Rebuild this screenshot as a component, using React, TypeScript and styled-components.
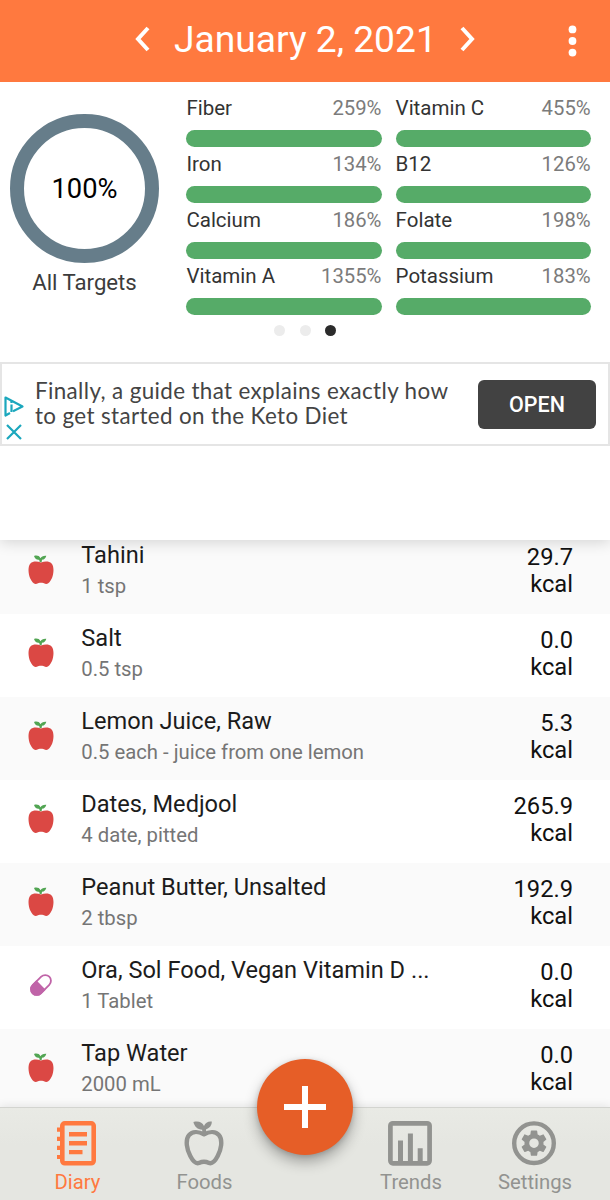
import React from 'react';
import styled, { createGlobalStyle } from 'styled-components';

const GlobalStyle = createGlobalStyle`
  * { box-sizing: border-box; }
  body { margin: 0; background: #fff; font-family: Roboto, "Liberation Sans", sans-serif; }
  svg { display: block; flex: none; }
`;

const Screen = styled.div`
  width: 610px;
  height: 1200px;
  display: flex;
  flex-direction: column;
  overflow: hidden;
`;

const Header = styled.header`
  height: 82px;
  flex: none;
  display: flex;
  align-items: center;
  padding: 0 30px 4px 135px;
  background: #ff793f;
  color: #fff;
`;

const HeaderTitle = styled.h1`
  width: 261px;
  margin: 0 25px 0 24px;
  font-size: 37.2px;
  line-height: 44px;
  font-weight: 400;
  white-space: nowrap;
`;

const MenuSlot = styled.div`
  margin-left: auto;
  padding-top: 3px;
`;

const TopPanel = styled.section`
  height: 458px;
  flex: none;
  background: #fff;
  position: relative;
  z-index: 1;
  box-shadow: 0 2px 14px rgba(0, 0, 0, 0.16);
  clip-path: inset(0 0 -24px 0);
`;

const Summary = styled.div`
  height: 237px;
  display: flex;
  padding: 13px 19px 0 10px;
`;

const Targets = styled.div`
  width: 149px;
  padding-top: 18.5px;
  margin-right: 27.4px;
`;

const Ring = styled.div`
  width: 149px;
  height: 149px;
  padding-top: 1px;
  border: 14px solid #667d8a;
  border-radius: 50%;
  display: flex;
  align-items: center;
  justify-content: center;
  font-size: 27.3px;
  color: #000;
`;

const TargetsLabel = styled.div`
  margin-top: 6.5px;
  text-align: center;
  font-size: 22.2px;
  line-height: 26px;
  color: #3c3c3c;
`;

const NutrientGrid = styled.div`
  display: grid;
  grid-template-columns: 195.6px 195.6px;
  grid-auto-rows: 56px;
  column-gap: 13.6px;
`;

const Nutrient = styled.div`
  display: flex;
  flex-direction: column;
`;

const NutrientText = styled.div`
  display: flex;
  justify-content: space-between;
  padding-right: 0.5px;
  font-size: 20.5px;
  line-height: 26px;
  color: #333;
`;

const Percent = styled.span`
  font-size: 20.3px;
  color: #7b7b7b;
`;

const Bar = styled.div`
  height: 17px;
  margin-top: 9px;
  border-radius: 9px;
  background: #56ab68;
`;

const Dots = styled.div`
  height: 43px;
  display: flex;
  justify-content: center;
  gap: 14.5px;
  padding: 6px 0 0 0;
`;

const Dot = styled.span<{ $active?: boolean }>`
  width: 11px;
  height: 11px;
  border-radius: 50%;
  background: ${(p) => (p.$active ? '#2b2b2b' : '#ececec')};
`;

const Ad = styled.aside`
  height: 84px;
  border: 2px solid #e5e5e5;
  display: flex;
  align-items: center;
  padding: 0 11px 0 1px;
`;

const AdMarks = styled.div`
  display: flex;
  flex-direction: column;
  align-items: center;
  gap: 7px;
  width: 21px;
  padding-top: 27px;
`;

const AdText = styled.p`
  width: 443px;
  margin: -1px 0 0 11px;
  font-family: Lato, Roboto, sans-serif;
  font-size: 22.4px;
  line-height: 24.5px;
  letter-spacing: 0.37px;
  color: #444;
  white-space: nowrap;
`;

const AdButton = styled.button`
  width: 118px;
  height: 49px;
  border: 0;
  padding: 0;
  border-radius: 6px;
  background: #424242;
  color: #fff;
  font: 500 21.5px Roboto, sans-serif;
`;

const List = styled.main`
  flex: 1;
  min-height: 0;
  margin-top: -9px;
  overflow: hidden;
`;

const Row = styled.div`
  height: 83px;
  display: flex;
  padding: 0 37px 0 26px;
  background: #fff;
  &:nth-child(odd) { background: #fafafa; }
`;

const RowIcon = styled.div`
  width: 29px;
  margin-right: 26.3px;
  padding-top: 24px;
  display: flex;
  justify-content: center;
`;

const RowBody = styled.div`
  flex: 1;
  padding-top: 10px;
`;

const FoodName = styled.div`
  font-size: 23.6px;
  line-height: 28px;
  color: #1c1c1c;
  white-space: nowrap;
`;

const Serving = styled.div`
  margin-top: 4px;
  font-size: 20.3px;
  line-height: 26px;
  color: #757575;
`;

const Energy = styled.div`
  padding-top: 13px;
  text-align: right;
  font-size: 23.7px;
  line-height: 27px;
  color: #111;
`;

const Nav = styled.nav`
  height: 93px;
  flex: none;
  position: relative;
  z-index: 2;
  display: flex;
  justify-content: space-between;
  padding: 0 13px 0 14px;
  border-top: 1px solid #d3d4d0;
  background: linear-gradient(#e9eae5, #e5e6e1 40%);
  box-shadow: 0 -2px 8px rgba(0, 0, 0, 0.08);
`;

const NavGroup = styled.div`
  display: flex;
`;

const NavItem = styled.div<{ $active?: boolean; $width: number }>`
  width: ${(p) => p.$width}px;
  padding-top: 12px;
  display: flex;
  flex-direction: column;
  align-items: center;
  color: ${(p) => (p.$active ? '#ff793f' : '#929390')};
  > svg { margin-right: 2px; }
`;

const NavLabel = styled.span`
  margin-top: 3px;
  font-size: 20.3px;
  line-height: 26px;
`;

const AddButton = styled.button`
  position: absolute;
  left: 257px;
  top: -49px;
  width: 96px;
  height: 96px;
  border: 0;
  padding: 0;
  border-radius: 50%;
  background: #e65e27;
  display: flex;
  align-items: center;
  justify-content: center;
  box-shadow: 0 7px 14px rgba(0, 0, 0, 0.3), 0 1px 5px rgba(0, 0, 0, 0.14);
`;

const Chevron = ({ d }: { d: string }) => (
  <svg width="15" height="26" viewBox="0 0 15 26" fill="none" stroke="currentColor" strokeWidth="4">
    <path d={d} />
  </svg>
);

const Apple = () => (
  <svg width="26" height="30" viewBox="0 0 26 30">
    <path
      d="M13 7.4C8.7 5.9 4.8 6.1 2.4 8.4C-.3 11.4.2 18.4 2 23C3.6 26.6 5.7 29.2 8 28.9C10.2 28.3 11.3 27.7 13 27.7C14.7 27.7 15.8 28.3 18 28.9C20.3 29.2 22.4 26.6 24 23C25.8 18.4 26.3 11.4 23.6 8.4C21.2 6.1 17.3 5.9 13 7.4Z"
      fill="#db4844"
    />
    <path
      d="M11.4 6.8C11.8 5.8 11.5 5.2 10.4 4.8C8.2 4.5 6.7 3 6 .9C8.7.1 11.3.6 12.5 3.2C13.3 1.5 15.2.6 18.3.8C17.9 3.2 16.3 4.6 14 4.8L13.6 7.2Z"
      fill="#52a553"
    />
  </svg>
);

const Pill = () => (
  <svg width="24" height="30" viewBox="0 0 24 30">
    <g transform="rotate(45 12 15)">
      <rect x="6.3" y="3.3" width="11.4" height="23.4" rx="5.7" fill="#fff" stroke="#c064a8" strokeWidth="1.8" />
      <path d="M5.4 15H18.6V21A6.6 6.6 0 0 1 5.4 21Z" fill="#c064a8" />
    </g>
  </svg>
);

const DiaryIcon = () => (
  <svg width="40" height="46" viewBox="0 0 40 46" fill="none" stroke="currentColor">
    <rect x="5.3" y="3.3" width="31.4" height="40" rx="2.5" strokeWidth="4.6" />
    <path d="M0 9.7H6M0 18.8H6M0 27.9H6M0 37H6" strokeWidth="4.2" />
    <path d="M12 14.3H30M12 23.2H30M12 32.1H25.5" strokeWidth="4.4" />
  </svg>
);

const FoodsIcon = () => (
  <svg width="40" height="46" viewBox="0 0 40 46">
    <path
      d="M20 14.4C14 11 8.2 11.4 5 15.2C.9 20.2 3 29.8 6.3 36C8.8 40.8 12 44.1 15 42.9C18.4 41.3 21.6 41.3 25 42.9C28 44.1 31.2 40.8 33.7 36C37 29.8 39.1 20.2 35 15.2C31.8 11.4 26 11 20 14.4Z"
      fill="none"
      stroke="currentColor"
      strokeWidth="4.4"
      strokeLinejoin="round"
    />
    <path
      d="M18.2 15V9.7C13.5 9.5 10.5 6.6 9.4 2C14.5.7 18.4 2.2 20 6C21.5 2.7 24.2 1 27.8 1.6C27.8 5.4 25.8 8.3 22.1 9.2V15Z"
      fill="currentColor"
    />
  </svg>
);

const TrendsIcon = () => (
  <svg width="46" height="46" viewBox="0 0 46 46" fill="none" stroke="currentColor">
    <rect x="3.4" y="3.3" width="39.2" height="40" rx="2.5" strokeWidth="4.7" />
    <path d="M13.5 43V20.6M23.4 43V13.6M33.2 43V28.2" strokeWidth="5" />
  </svg>
);

const SettingsIcon = () => (
  <svg width="46" height="46" viewBox="0 0 46 46">
    <circle cx="23" cy="23.2" r="19.8" fill="none" stroke="currentColor" strokeWidth="4.4" />
    <g transform="translate(7.16 7.36) scale(1.32)" fill="currentColor">
      <path d="M19.14 12.94c.04-.3.06-.61.06-.94 0-.32-.02-.64-.07-.94l2.03-1.58a.49.49 0 0 0 .12-.61l-1.92-3.32a.488.488 0 0 0-.59-.22l-2.39.96c-.5-.38-1.03-.7-1.62-.94l-.36-2.54a.484.484 0 0 0-.48-.41h-3.84c-.24 0-.43.17-.47.41l-.36 2.54c-.59.24-1.13.57-1.62.94l-2.39-.96c-.22-.08-.47 0-.59.22L2.74 8.87c-.12.21-.08.47.12.61l2.03 1.58c-.05.3-.09.63-.09.94s.02.64.07.94l-2.03 1.58a.49.49 0 0 0-.12.61l1.92 3.32c.12.22.37.29.59.22l2.39-.96c.5.38 1.03.7 1.62.94l.36 2.54c.05.24.24.41.48.41h3.84c.24 0 .44-.17.47-.41l.36-2.54c.59-.24 1.13-.56 1.62-.94l2.39.96c.22.08.47 0 .59-.22l1.92-3.32c.12-.22.07-.47-.12-.61l-2.01-1.58zM12 15.6a3.6 3.6 0 1 1 0-7.2 3.6 3.6 0 0 1 0 7.2z" />
    </g>
  </svg>
);

const nutrients = [
  ['Fiber', '259%'],
  ['Vitamin C', '455%'],
  ['Iron', '134%'],
  ['B12', '126%'],
  ['Calcium', '186%'],
  ['Folate', '198%'],
  ['Vitamin A', '1355%'],
  ['Potassium', '183%'],
];

const entries = [
  { name: 'Tahini', serving: '1 tsp', kcal: '29.7' },
  { name: 'Salt', serving: '0.5 tsp', kcal: '0.0' },
  { name: 'Lemon Juice, Raw', serving: '0.5 each - juice from one lemon', kcal: '5.3' },
  { name: 'Dates, Medjool', serving: '4 date, pitted', kcal: '265.9' },
  { name: 'Peanut Butter, Unsalted', serving: '2 tbsp', kcal: '192.9' },
  { name: 'Ora, Sol Food, Vegan Vitamin D ...', serving: '1 Tablet', kcal: '0.0', pill: true },
  { name: 'Tap Water', serving: '2000 mL', kcal: '0.0' },
];

export default function App() {
  return (
    <Screen>
      <GlobalStyle />
      <Header>
        <Chevron d="M13 2L3 13L13 24" />
        <HeaderTitle>January 2, 2021</HeaderTitle>
        <Chevron d="M2 2L12 13L2 24" />
        <MenuSlot>
          <svg width="15" height="32" viewBox="0 0 15 32" fill="currentColor">
            <circle cx="7.5" cy="4.4" r="3.9" />
            <circle cx="7.5" cy="16" r="3.9" />
            <circle cx="7.5" cy="27.6" r="3.9" />
          </svg>
        </MenuSlot>
      </Header>

      <TopPanel>
        <Summary>
          <Targets>
            <Ring>100%</Ring>
            <TargetsLabel>All Targets</TargetsLabel>
          </Targets>
          <NutrientGrid>
            {nutrients.map(([name, value]) => (
              <Nutrient key={name}>
                <NutrientText>
                  <span>{name}</span>
                  <Percent>{value}</Percent>
                </NutrientText>
                <Bar />
              </Nutrient>
            ))}
          </NutrientGrid>
        </Summary>
        <Dots>
          <Dot />
          <Dot />
          <Dot $active />
        </Dots>
        <Ad>
          <AdMarks>
            <svg width="21" height="21" viewBox="0 0 21 21" fill="none" stroke="#1ba7bd" strokeWidth="2.2">
              <path d="M7 17L2.5 19.5V1.5L19.5 10.5L10 15.3" strokeLinejoin="round" />
              <path d="M8.5 8.6V16M8.5 5V7" />
            </svg>
            <svg width="16" height="16" viewBox="0 0 16 16" fill="none" stroke="#1ba7bd" strokeWidth="2.2">
              <path d="M1 1L15 15M15 1L1 15" />
            </svg>
          </AdMarks>
          <AdText>
            Finally, a guide that explains exactly how
            <br />
            to get started on the Keto Diet
          </AdText>
          <AdButton>OPEN</AdButton>
        </Ad>
      </TopPanel>

      <List>
        {entries.map((e) => (
          <Row key={e.name}>
            <RowIcon>{e.pill ? <Pill /> : <Apple />}</RowIcon>
            <RowBody>
              <FoodName>{e.name}</FoodName>
              <Serving>{e.serving}</Serving>
            </RowBody>
            <Energy>
              {e.kcal}
              <br />
              kcal
            </Energy>
          </Row>
        ))}
      </List>

      <Nav>
        <NavGroup>
          <NavItem $active $width={127}>
            <DiaryIcon />
            <NavLabel>Diary</NavLabel>
          </NavItem>
          <NavItem $width={127}>
            <FoodsIcon />
            <NavLabel>Foods</NavLabel>
          </NavItem>
        </NavGroup>
        <AddButton aria-label="Add">
          <svg width="42" height="42" viewBox="0 0 42 42" stroke="#fff" strokeWidth="6">
            <path d="M21 0V42M0 21H42" />
          </svg>
        </AddButton>
        <NavGroup>
          <NavItem $width={124}>
            <TrendsIcon />
            <NavLabel>Trends</NavLabel>
          </NavItem>
          <NavItem $width={124}>
            <SettingsIcon />
            <NavLabel>Settings</NavLabel>
          </NavItem>
        </NavGroup>
      </Nav>
    </Screen>
  );
}
